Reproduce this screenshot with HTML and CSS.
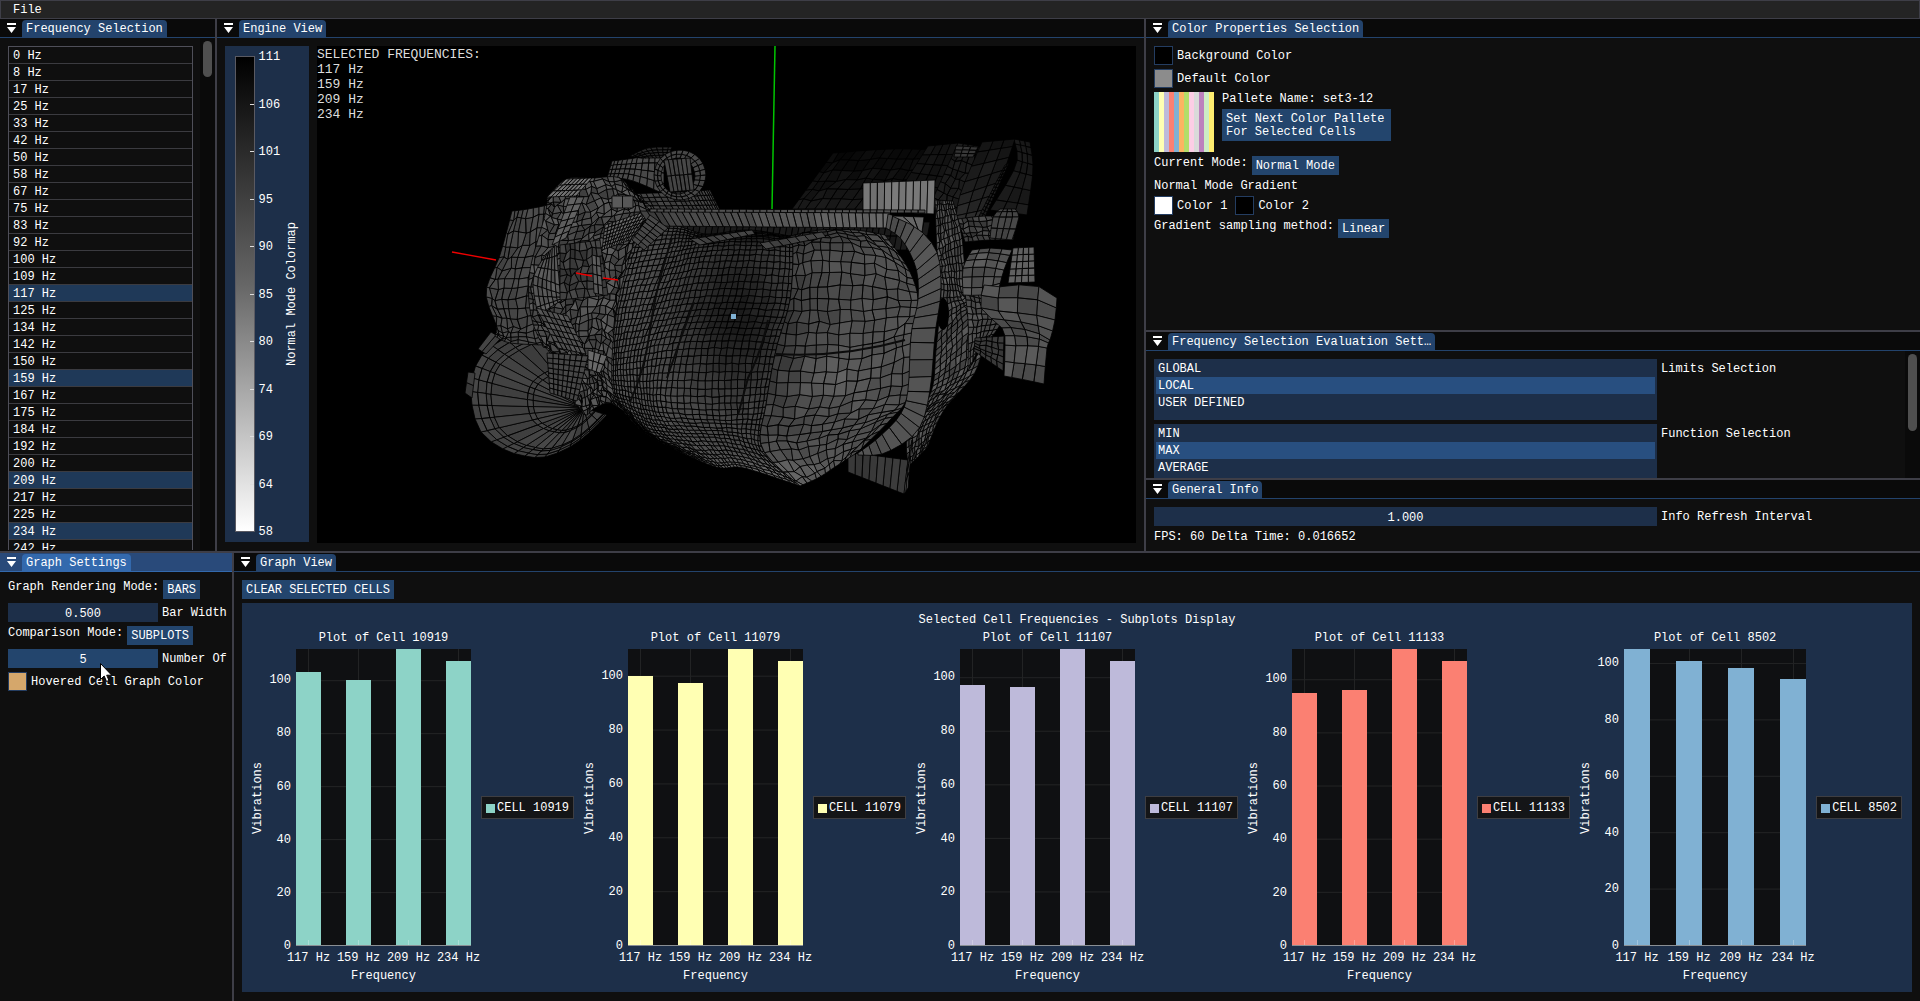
FILE: index.html
```html
<!DOCTYPE html>
<html lang="en">
<head>
<meta charset="utf-8">
<title>Engine Vibration Viewer</title>
<link rel="stylesheet" href="styles.css">
</head>
<body>
<svg class="defs" width="0" height="0" aria-hidden="true">
  <symbol id="collapse" viewBox="0 0 9 10"><path d="M0 0h9v2H0zM0 4h9L4.500 10z" fill="#fff"/></symbol>
</svg>
<nav class="menubar"><button class="menu-item" type="button">File</button></nav>
<main class="workspace">
  <div class="upper">
    <section class="window">
      <header class="tabbar"><svg class="collapse"><use href="#collapse"/></svg><h2 class="tab">Frequency Selection</h2></header>
      <div class="body scroll-body freq-body">
        <div class="scroll-content">
        <table class="freqs"><tbody>
          <tr><td>0 Hz</td></tr><tr><td>8 Hz</td></tr><tr><td>17 Hz</td></tr><tr><td>25 Hz</td></tr><tr><td>33 Hz</td></tr>
          <tr><td>42 Hz</td></tr><tr><td>50 Hz</td></tr><tr><td>58 Hz</td></tr><tr><td>67 Hz</td></tr><tr><td>75 Hz</td></tr>
          <tr><td>83 Hz</td></tr><tr><td>92 Hz</td></tr><tr><td>100 Hz</td></tr><tr><td>109 Hz</td></tr><tr class="selected"><td>117 Hz</td></tr>
          <tr><td>125 Hz</td></tr><tr><td>134 Hz</td></tr><tr><td>142 Hz</td></tr><tr><td>150 Hz</td></tr><tr class="selected"><td>159 Hz</td></tr>
          <tr><td>167 Hz</td></tr><tr><td>175 Hz</td></tr><tr><td>184 Hz</td></tr><tr><td>192 Hz</td></tr><tr><td>200 Hz</td></tr>
          <tr class="selected"><td>209 Hz</td></tr><tr><td>217 Hz</td></tr><tr><td>225 Hz</td></tr><tr class="selected"><td>234 Hz</td></tr><tr><td>242 Hz</td></tr>
        </tbody></table>
        </div>
        <div class="scrollbar"><div class="thumb thumb-short"></div></div>
      </div>
    </section>

    <section class="window">
      <header class="tabbar"><svg class="collapse"><use href="#collapse"/></svg><h2 class="tab">Engine View</h2></header>
      <div class="body engine-body">
        <div class="colormap">
          <div class="ramp"><i></i><i></i><i></i><i></i><i></i><i></i><i></i><i></i><i></i></div>
          <div class="ramp-labels"><span>111</span><span>106</span><span>101</span><span>95</span><span>90</span><span>85</span><span>80</span><span>74</span><span>69</span><span>64</span><span>58</span></div>
          <div class="vertical">Normal Mode Colormap</div>
        </div>
        <div class="viewport">
          <svg id="scene" viewBox="317 46 819 497" preserveAspectRatio="xMidYMid meet" role="img" aria-label="Engine mesh"></svg>
          <div class="overlay-text">SELECTED FREQUENCIES:<br>117 Hz<br>159 Hz<br>209 Hz<br>234 Hz</div>
        </div>
      </div>
    </section>

    <div class="side">
      <section class="window">
        <header class="tabbar"><svg class="collapse"><use href="#collapse"/></svg><h2 class="tab">Color Properties Selection</h2></header>
        <div class="body stack">
          <div class="field"><input class="swatch" type="color" id="bg" value="#000000"><label for="bg">Background Color</label></div>
          <div class="field"><input class="swatch" type="color" id="def" value="#8c8c8c"><label for="def">Default Color</label></div>
          <div class="palette-row">
            <div class="palette"></div>
            <div class="stack palette-info"><span class="caption">Pallete Name: set3-12</span><button class="btn btn-wide" type="button">Set Next Color Pallete<br>For Selected Cells</button></div>
          </div>
          <div class="option"><span class="caption">Current Mode:</span><button class="btn" type="button">Normal Mode</button></div>
          <div class="caption">Normal Mode Gradient</div>
          <div class="pair">
            <div class="field"><input class="swatch" type="color" id="c1" value="#ffffff"><label for="c1">Color 1</label></div>
            <div class="field"><input class="swatch" type="color" id="c2" value="#000000"><label for="c2">Color 2</label></div>
          </div>
          <div class="option"><span class="caption">Gradient sampling method:</span><button class="btn" type="button">Linear</button></div>
        </div>
      </section>
      <section class="window">
        <header class="tabbar"><svg class="collapse"><use href="#collapse"/></svg><h2 class="tab">Frequency Selection Evaluation Sett…</h2></header>
        <div class="body scroll-body">
          <div class="scroll-content stack">
            <div class="list-row">
              <div class="listbox" role="listbox" aria-labelledby="limits"><button role="option" type="button">GLOBAL</button><button role="option" type="button" aria-selected="true">LOCAL</button><button role="option" type="button">USER DEFINED</button></div>
              <span id="limits">Limits Selection</span>
            </div>
            <div class="list-row">
              <div class="listbox" role="listbox" aria-labelledby="func"><button role="option" type="button">MIN</button><button role="option" type="button" aria-selected="true">MAX</button><button role="option" type="button">AVERAGE</button></div>
              <span id="func">Function Selection</span>
            </div>
          </div>
          <div class="scrollbar"><div class="thumb thumb-long"></div></div>
        </div>
      </section>
      <section class="window">
        <header class="tabbar"><svg class="collapse"><use href="#collapse"/></svg><h2 class="tab">General Info</h2></header>
        <div class="body stack">
          <div class="field"><input class="value" type="text" id="refresh" value="1.000"><label for="refresh">Info Refresh Interval</label></div>
          <div class="caption">FPS: 60 Delta Time: 0.016652</div>
        </div>
      </section>
    </div>
  </div>

  <div class="lower">
    <section class="window focused">
      <header class="tabbar"><svg class="collapse"><use href="#collapse"/></svg><h2 class="tab">Graph Settings</h2></header>
      <div class="body stack">
        <div class="option"><span class="caption">Graph Rendering Mode:</span><button class="btn" type="button">BARS</button></div>
        <div class="field"><input class="value" type="text" id="barw" value="0.500"><label for="barw">Bar Width</label></div>
        <div class="option"><span class="caption">Comparison Mode:</span><button class="btn" type="button">SUBPLOTS</button></div>
        <div class="field"><input class="value hovered" type="text" id="num" value="5"><label for="num">Number Of</label></div>
        <div class="field"><input class="swatch" type="color" id="hov" value="#d5a76b"><label for="hov">Hovered Cell Graph Color</label></div>
      </div>
      <svg class="cursor" viewBox="0 0 12 19"><path d="M.5.5v16l3.700-3.500 2.300 5.500 2.500-1-2.300-5.300h5z" fill="#fff" stroke="#000"/></svg>
    </section>

    <section class="window">
      <header class="tabbar"><svg class="collapse"><use href="#collapse"/></svg><h2 class="tab">Graph View</h2></header>
      <div class="body stack graph-body">
        <div class="toolbar"><button class="btn" type="button">CLEAR SELECTED CELLS</button></div>
        <div class="plots">
          <h3 class="plots-title">Selected Cell Frequencies - Subplots Display</h3>
          <div class="plots-row">
            <figure class="subplot" style="--c:#8dd3c7;--step:17.900%">
              <div class="vertical ylabel">Vibrations</div>
              <div class="yticks"><span>0</span><span>20</span><span>40</span><span>60</span><span>80</span><span>100</span></div>
              <div class="chart"><figcaption>Plot of Cell 10919</figcaption>
                <div class="area"><i><b style="height:92.200%"></b></i><i><b style="height:89.500%"></b></i><i><b style="height:100%"></b></i><i><b style="height:96%"></b></i></div>
                <div class="xticks"><span>117 Hz</span><span>159 Hz</span><span>209 Hz</span><span>234 Hz</span></div>
                <div class="xlabel">Frequency</div></div>
              <div class="legend"><i></i>CELL 10919</div>
            </figure>
            <figure class="subplot" style="--c:#ffffb3;--step:18.200%">
              <div class="vertical ylabel">Vibrations</div>
              <div class="yticks"><span>0</span><span>20</span><span>40</span><span>60</span><span>80</span><span>100</span></div>
              <div class="chart"><figcaption>Plot of Cell 11079</figcaption>
                <div class="area"><i><b style="height:90.800%"></b></i><i><b style="height:88.600%"></b></i><i><b style="height:100%"></b></i><i><b style="height:96%"></b></i></div>
                <div class="xticks"><span>117 Hz</span><span>159 Hz</span><span>209 Hz</span><span>234 Hz</span></div>
                <div class="xlabel">Frequency</div></div>
              <div class="legend"><i></i>CELL 11079</div>
            </figure>
            <figure class="subplot" style="--c:#bebada;--step:18.100%">
              <div class="vertical ylabel">Vibrations</div>
              <div class="yticks"><span>0</span><span>20</span><span>40</span><span>60</span><span>80</span><span>100</span></div>
              <div class="chart"><figcaption>Plot of Cell 11107</figcaption>
                <div class="area"><i><b style="height:87.900%"></b></i><i><b style="height:87.200%"></b></i><i><b style="height:100%"></b></i><i><b style="height:96%"></b></i></div>
                <div class="xticks"><span>117 Hz</span><span>159 Hz</span><span>209 Hz</span><span>234 Hz</span></div>
                <div class="xlabel">Frequency</div></div>
              <div class="legend"><i></i>CELL 11107</div>
            </figure>
            <figure class="subplot" style="--c:#fb8072;--step:17.960%">
              <div class="vertical ylabel">Vibrations</div>
              <div class="yticks"><span>0</span><span>20</span><span>40</span><span>60</span><span>80</span><span>100</span></div>
              <div class="chart"><figcaption>Plot of Cell 11133</figcaption>
                <div class="area"><i><b style="height:85.200%"></b></i><i><b style="height:86.200%"></b></i><i><b style="height:100%"></b></i><i><b style="height:96%"></b></i></div>
                <div class="xticks"><span>117 Hz</span><span>159 Hz</span><span>209 Hz</span><span>234 Hz</span></div>
                <div class="xlabel">Frequency</div></div>
              <div class="legend"><i></i>CELL 11133</div>
            </figure>
            <figure class="subplot" style="--c:#80b1d3;--step:19.060%">
              <div class="vertical ylabel">Vibrations</div>
              <div class="yticks"><span>0</span><span>20</span><span>40</span><span>60</span><span>80</span><span>100</span></div>
              <div class="chart"><figcaption>Plot of Cell 8502</figcaption>
                <div class="area"><i><b style="height:100%"></b></i><i><b style="height:96%"></b></i><i><b style="height:93.600%"></b></i><i><b style="height:89.900%"></b></i></div>
                <div class="xticks"><span>117 Hz</span><span>159 Hz</span><span>209 Hz</span><span>234 Hz</span></div>
                <div class="xlabel">Frequency</div></div>
              <div class="legend"><i></i>CELL 8502</div>
            </figure>
          </div>
        </div>
      </div>
    </section>
  </div>
</main>
<script src="scene.js"></script>
</body>
</html>
```
FILE: styles.css
```css
* { box-sizing: border-box; }
body {
  margin: 0;
  height: 100vh;
  display: flex;
  flex-direction: column;
  overflow: hidden;
  background: #0f0f0f;
  color: #fff;
  font: 12px/13px "Liberation Mono", "DejaVu Sans Mono", monospace;
}
h2, h3, figure { margin: 0; font: inherit; }
button, input { font: inherit; color: inherit; border: 0; border-radius: 0; margin: 0; }
.defs { display: none; }

.menubar {
  flex: none;
  height: 19px;
  display: flex;
  padding: 0 8px;
  background: #242424;
  border: 1px solid #3e3e47;
}
.menu-item { background: none; padding: 2px 4px 0; line-height: 15px; }

.workspace {
  flex: 1;
  min-height: 0;
  display: grid;
  grid-template-rows: minmax(0, 532fr) minmax(0, 448fr);
  gap: 2px;
  background: #3e3e47;
}
.upper, .lower, .side { display: grid; gap: 2px; min-width: 0; min-height: 0; }
.upper { grid-template-columns: 215px minmax(0, 1fr) 774px; }
.lower { grid-template-columns: 232px minmax(0, 1fr); }
.side { grid-template-rows: minmax(0, 311fr) minmax(0, 146fr) minmax(0, 71fr); }

.window {
  position: relative;
  display: flex;
  flex-direction: column;
  min-width: 0;
  min-height: 0;
  overflow: hidden;
  background: #0f0f0f;
}
.tabbar {
  flex: none;
  height: 19px;
  display: flex;
  align-items: flex-end;
  gap: 6px;
  padding-left: 7px;
  background: #0a0a0a;
  border-bottom: 1px solid #23436c;
}
.collapse { width: 9px; height: 10px; align-self: center; }
.tab { height: 17px; padding: 2px 4px 0; line-height: 15px; border-radius: 4px 4px 0 0; background: #23436c; white-space: nowrap; }
.focused .tabbar { background: #294a7a; border-color: #3369ad; }
.focused .tab { background: #3369ad; }

.body { flex: 1; min-height: 0; padding: 8px; white-space: nowrap; }
.stack { display: flex; flex-direction: column; gap: 4px; }

.scroll-body { display: flex; padding: 0; }
.scroll-content { flex: 1; min-width: 0; min-height: 0; padding: 8px 7px 0 8px; overflow: hidden; }
.scrollbar { flex: none; width: 15px; padding: 3px; background: #0a0a0a; }
.thumb { border-radius: 5px; background: #4f4f4f; }
.thumb-short { height: 36px; }
.thumb-long { height: 77px; }
.freq-body { padding-bottom: 1px; }

.freqs { width: 185px; border-collapse: separate; border-spacing: 0; border: 1px solid #4f4f59; }
.freqs td { height: 17px; padding: 2px 4px 0; line-height: 14px; border-bottom: 1px solid #3b3b40; }
.freqs .selected td { background: #1f3958; }

.engine-body { display: flex; gap: 8px; }
.colormap { flex: none; width: 84px; margin-bottom: 1px; padding: 10px; display: flex; background: #1d2f49; }
.ramp {
  width: 20px;
  display: flex;
  flex-direction: column;
  justify-content: space-evenly;
  align-items: flex-end;
  border: 1px solid #5a5a62;
  background: linear-gradient(#000, #666 48%, #fff);
}
.ramp i { width: 4px; height: 1px; background: #ddd; }
.ramp-labels { margin: -5px 0 -7px 4px; width: 24px; display: flex; flex-direction: column; justify-content: space-between; }
.vertical { writing-mode: vertical-rl; transform: rotate(180deg); text-align: center; }
.colormap .vertical { margin-left: 4px; }
.viewport { position: relative; flex: 1; min-width: 0; background: #000; overflow: hidden; }
.viewport svg { display: block; width: 100%; height: 100%; }
.overlay-text { position: absolute; top: 1px; left: 0; color: #ddd; font-size: 13px; line-height: 15px; }

.field { display: flex; gap: 4px; }
.field label { padding-top: 2px; line-height: 17px; }
.swatch { width: 19px; height: 19px; padding: 0; background: none; border: 1px solid #243d61; appearance: none; }
.swatch::-webkit-color-swatch-wrapper { padding: 0; }
.swatch::-webkit-color-swatch { border: 0; border-radius: 0; }
.btn { padding: 4px 4px 2px; background: #23456d; text-align: left; white-space: nowrap; }
.option { display: flex; align-items: flex-start; gap: 4px; }
.palette-row { display: flex; gap: 8px; }
.palette {
  width: 60px;
  height: 60px;
  background: linear-gradient(90deg, #8dd3c7 5px, #ffffb3 5px 10px, #bebada 10px 15px, #fb8072 15px 20px, #80b1d3 20px 25px, #fdb462 25px 30px, #b3de69 30px 35px, #fccde5 35px 40px, #d9d9d9 40px 45px, #bc80bd 45px 50px, #ccebc5 50px 55px, #ffed6f 55px);
}
.btn-wide { width: 169px; }
.caption { height: 13px; line-height: 15px; }
.pair { display: flex; gap: 8px; }

.value { flex: none; width: 503px; height: 19px; padding: 2px 0 0; text-align: center; background: #1d2f49; }
.focused .value { width: 150px; }
.focused .value.hovered { background: #23456d; }
.cursor { position: absolute; left: 100px; top: 110px; width: 12px; height: 19px; }

.list-row { display: flex; gap: 4px; }
.list-row > span { padding-top: 4px; }
.listbox { flex: none; width: 503px; height: 61px; padding: 1px 2px; display: flex; flex-direction: column; background: #1d2f49; }
.listbox button { height: 17px; padding: 2px 2px 0; text-align: left; background: none; }
.listbox [aria-selected] { background: #284f80; }

.graph-body { padding-bottom: 9px; }
.toolbar { display: flex; }
.plots { flex: 1; min-height: 0; padding: 11px 10px 9px; display: flex; flex-direction: column; gap: 5px; background: #1d2f49; }
.plots-title { text-align: center; }
.plots-row { flex: 1; min-height: 0; display: flex; gap: 10px; }
.subplot { flex: 1 1 0; min-width: 0; display: flex; }
.ylabel { margin: 17px 0 37px; }
.yticks { width: 26px; margin: 17px 5px 37px 0; display: flex; flex-direction: column-reverse; }
.yticks span { height: var(--step); margin-top: -6px; margin-bottom: 6px; text-align: right; }
.yticks span:first-child { height: 0; }
.chart { flex: 1; min-width: 0; display: flex; flex-direction: column; text-align: center; }
.chart figcaption { height: 17px; }
.area {
  flex: 1;
  min-height: 0;
  display: flex;
  justify-content: space-between;
  border-bottom: 1px solid #8a8f94;
  background: #0f1012 linear-gradient(0deg, transparent calc(100% - 1px), #222324 0) 0 100% / 100% var(--step);
}
.area i { width: 14.285%; display: flex; align-items: flex-end; background: linear-gradient(#222324, #222324) 50% 0 / 1px 100% no-repeat; }
.area b { flex: 1; background: linear-gradient(#ffffff44, #ffffff44) 50% 100% / 1px 5px no-repeat var(--c); }
.xticks { height: 18px; padding-top: 6px; display: flex; justify-content: space-between; }
.xticks span { width: 14.285%; display: flex; justify-content: center; white-space: nowrap; }
.xlabel { height: 19px; padding-top: 6px; }
.legend { align-self: center; display: flex; align-items: center; gap: 2px; margin-left: 10px; padding: 5px 4px 3px; border: 1px solid #3e3e42; background: #141517; }
.legend i { width: 9px; height: 9px; background: var(--c); }
```
FILE: scene.js
```js
// Builds the engine mesh: each patch is a grid of control points,
// interpolated with Catmull-Rom splines and split into shaded quads.
(function () {
  const scene = document.getElementById('scene');
  const NS = 'http://www.w3.org/2000/svg';

  function add(tag, attrs) {
    const el = document.createElementNS(NS, tag);
    for (const k in attrs) el.setAttribute(k, attrs[k]);
    scene.appendChild(el);
  }
  function noise(a, b) {
    const s = Math.sin(a * 12.9898 + b * 78.233) * 43758.5453;
    return s - Math.floor(s) - 0.5;
  }
  function spline(pts, t) {
    const n = pts.length - 1;
    const i = Math.min(n - 1, Math.floor(t * n));
    const f = t * n - i;
    if (n === 1) return [0, 1].map(k => pts[0][k] + (pts[1][k] - pts[0][k]) * f);
    const a = pts[Math.max(0, i - 1)], b = pts[i], c = pts[i + 1], d = pts[Math.min(n, i + 2)];
    return [0, 1].map(k => 0.5 * (2 * b[k] + (c[k] - a[k]) * f +
      (2 * a[k] - 5 * b[k] + 4 * c[k] - d[k]) * f * f +
      (3 * b[k] - a[k] - 3 * c[k] + d[k]) * f * f * f));
  }
  function patch(rows, nu, nv, shade, o) {
    o = o || {};
    const grain = o.grain || 6, jitter = o.jitter || 0;
    const vs = o.vs || Array.from({ length: nv + 1 }, (_, j) => j / nv);
    const grid = vs.map((v, j) => Array.from({ length: nu + 1 }, (_, i) => {
      const p = spline(rows.map(r => spline(r, i / nu)), v);
      const edge = i === 0 || i === nu || j === 0 || j === vs.length - 1;
      return edge ? p : [p[0] + noise(i, j) * jitter, p[1] + noise(j, i + 9) * jitter];
    }));
    const groups = {};
    for (let j = 0; j < vs.length - 1; j++) for (let i = 0; i < nu; i++) {
      const q = [grid[j][i], grid[j][i + 1], grid[j + 1][i + 1], grid[j + 1][i]];
      const base = typeof shade === 'function' ? shade(q[0][0], q[0][1]) : shade;
      const s = Math.max(4, Math.round((base + noise(i + 3, j + 5) * grain) / 3) * 3);
      (groups[s] = groups[s] || []).push('M' + q.map(p => p[0].toFixed(1) + ' ' + p[1].toFixed(1)).join('L') + 'Z');
    }
    for (const s in groups) add('path', { d: groups[s].join(''), fill: `rgb(${s},${s},${s})`, stroke: '#000', 'stroke-width': o.line || 0.8 });
  }
  const glow = (x, y, cx, cy, rx, ry) => Math.exp(-(((x - cx) / rx) ** 2 + ((y - cy) / ry) ** 2));

  // Rear housing
  patch([[[833,153],[890,149],[940,150]],[[792,209],[850,209],[910,211]]], 13, 6, (x, y) => 8 + (y - 150) * 0.35, { jitter: 3 });
  patch([[[928,146],[958,143]],[[900,190],[938,200]]], 4, 5, 20);
  patch([[[958,143],[984,147]],[[930,205],[960,222]]], 5, 8, 28, { jitter: 3 });
  patch([[[956,146],[978,147]],[[954,157],[973,157]]], 3, 3, 55);
  patch([[[1014,139],[1030,142]],[[1016,165],[1033,170]],[[990,210],[1027,215]]], 3, 7, 26);
  patch([[[982,142],[1015,139]],[[960,195],[1000,182]],[[955,230],[977,231]]], 3, 8, (x, y) => 20 + (y - 140) * 0.3);
  patch([[[1005,165],[1009,163]],[[976,222],[981,226]]], 2, 18, 30);

  // Right side block and its pipe fittings
  patch([[[958,219],[985,216],[1018,217]],[[965,242],[990,240],[1013,240]]], 10, 5, 66, { grain: 26, jitter: 3 });
  patch([[[1000,209],[1015,209]],[[993,217],[1019,217]],[[990,238],[1012,240]]], 4, 4, 70);
  patch([[[935,200],[953,201]],[[937,250],[962,238]],[[941,290],[968,292]],[[936,350],[984,302]],[[931,392],[978,366]],[[908,430],[944,410]],[[908,467],[927,448]]], 9, 42, 78, { grain: 30, jitter: 2 });
  patch([[[963,280],[992,292]],[[968,320],[1002,320]],[[968,371],[980,350]]], 7, 14, 78, { grain: 24, jitter: 2 });
  add('ellipse', { cx: 943, cy: 314, rx: 6, ry: 16, fill: '#000' });
  patch([[[972,250],[990,248],[1012,250]],[[963,268],[985,267],[1004,270]],[[963,295],[982,295],[999,288]]], 4, 6, 86, { grain: 26 });
  patch([[[975,338],[1004,336]],[[974,351],[1003,371]]], 5, 5, 58, { jitter: 2 });
  patch([[[984,285],[1006,287],[1032,284],[1057,298]],[[981,308],[1005,312],[1030,314],[1055,320]],[[1002,328],[1015,328],[1035,332],[1050,340]],[[1005,345],[1020,346],[1035,346],[1047,348]],[[1004,376],[1015,378],[1030,381],[1044,384]]], 4, 8, 80, { grain: 22 });
  patch([[[1013,248],[1034,247]],[[1008,283],[1035,282]]], 4, 5, 98);

  // Mount plate above the block and the lower foot
  patch([[[863,183],[935,180]],[[863,211],[934,214]]], 10, 1, 116, { grain: 14 });
  patch([[[848,452],[908,460]],[[848,472],[904,494]]], 8, 1, 56);
  patch([[[908,460],[912,440]],[[904,494],[908,488]]], 2, 3, 88);

  // Top cylinder
  patch([[[612,161],[635,158],[664,152]],[[607,178],[630,180],[664,194]]], 11, 4, 74);
  patch([[[630,156],[648,148],[672,147]],[[640,158],[655,158],[668,158]]], 9, 4, 40);
  patch([[[628,194],[680,192],[710,190]],[[636,210],[690,210],[720,210]]], 20, 4, 64, { grain: 14 });
  const ring = (cx, cy, rx, ry) => Array.from({ length: 17 }, (_, i) => [cx + rx * Math.cos(i * Math.PI / 8), cy + ry * Math.sin(i * Math.PI / 8)]);
  patch([ring(680,175,26,25), ring(678,176,17,18)], 26, 2, 70);
  patch([[[664,160],[690,158]],[[670,192],[694,190]]], 6, 2, 68);

  // Left plate, bell housing and accessory cluster
  const rim = [[533,325],[505,338],[482,355],[472,378],[472,405],[481,432],[503,449],[525,456],[545,457],[570,447],[590,432],[607,415]];
  const toward = k => rim.map(p => [p[0] + (584 - p[0]) * k, p[1] + (408 - p[1]) * k]);
  patch([rim, toward(0.5), toward(0.95)], 22, 0, 66, { vs: [0, 0.09, 0.17, 0.21, 0.5, 0.55, 1], grain: 10 });
  patch([[[491,332],[501,338]],[[478,349],[486,354]]], 2, 1, 66);
  patch([[[468,372],[475,373]],[[465,393],[472,398]]], 1, 2, 60);
  patch([[[512,211],[528,209],[548,205]],[[500,255],[520,255],[545,250]],[[486,292],[510,295],[540,290]],[[496,325],[512,330],[540,325]],[[495,336],[510,343],[545,345]]], 8, 15, 72, { grain: 12, jitter: 4 });
  patch([[[547,197],[566,179],[592,178],[620,178],[636,197]],[[545,215],[570,225],[600,215],[630,210],[652,210]],[[530,270],[560,265],[595,250],[620,255],[640,240]],[[530,310],[555,310],[580,300],[610,300],[622,310]],[[540,340],[560,350],[580,345],[600,345],[620,360]],[[560,365],[575,375],[590,375],[605,385],[625,410]],[[575,400],[585,415],[595,408],[612,404],[640,425]]], 19, 38, 76, { grain: 34, jitter: 5 });
  patch([[[566,179],[592,178]],[[547,197],[576,196]]], 7, 3, 112);
  patch([[[570,197],[584,197]],[[552,245],[566,238]]], 2, 6, 96);
  patch([[[612,196],[633,196]],[[612,208],[633,208]]], 2, 1, 88);
  patch([[[545,255],[556,245]],[[533,280],[560,290]],[[538,315],[562,300]]], 6, 7, 88, { grain: 20 });
  patch([[[560,245],[600,240]],[[560,300],[608,295]]], 8, 7, 60, { grain: 26, jitter: 5 });
  patch([[[592,255],[600,257]],[[594,293],[603,295]]], 2, 4, 90);
  patch([[[536,308],[568,316]],[[558,348],[586,354]]], 6, 6, 82, { grain: 16 });
  patch([[[588,350],[607,356]],[[588,369],[600,373]]], 3, 2, 104);
  patch([[[547,353],[588,356]],[[550,393],[577,401]]], 7, 8, 70);
  patch([[[605,225],[650,210]],[[602,250],[630,240]]], 12, 7, 100, { grain: 20 });

  // Block cover: dense left half, coarse right half, rim on the top and right
  patch([[[645,222],[930,222]],[[640,250],[925,250]]], 46, 2, 26);
  const left = [
    [[640,228],[676,226],[706,234],[748,230],[790,236]],
    [[628,262],[668,256],[702,250],[748,248],[793,250]],
    [[617,310],[650,306],[688,300],[738,298],[790,300]],
    [[612,360],[636,356],[672,350],[724,348],[776,350]],
    [[614,395],[638,402],[666,406],[722,408],[766,405]],
    [[628,415],[650,432],[685,438],[728,440],[762,448]],
    [[642,432],[672,448],[716,467],[744,468],[800,486]]];
  const body = (x, y) => 80 - 52 * glow(x, y, 735, 312, 60, 90) + 30 * glow(x, y, 740, 474, 90, 16)
    - 36 * glow(x, y, 770, 232, 80, 10) + 18 * glow(x, y, 825, 370, 40, 22);
  patch(left, 34, 46, body, { jitter: 1.2, grain: 7 });
  patch([
    [[790,236],[820,230],[855,230],[885,235]],
    [[793,250],[825,246],[870,250],[908,268]],
    [[790,300],[822,300],[870,298],[918,300]],
    [[776,350],[820,352],[870,350],[911,338]],
    [[766,405],[812,408],[860,402],[908,395]],
    [[762,448],[802,445],[845,435],[890,420]],
    [[800,486],[818,478],[838,465],[858,452]]], 13, 27, body, { jitter: 4, grain: 13 });
  for (const d of ['M672 238Q655 290 650 330T630 402', 'M694 302Q680 340 667 378', 'M776 354Q840 358 905 340', 'M768 320Q762 350 748 378L738 415'])
    add('path', { d, fill: 'none', stroke: '#0c0c0c', 'stroke-width': 2 });
  patch([[[690,239],[752,230]],[[700,245],[755,234]]], 8, 1, 66);
  patch([[[760,243],[822,232]],[[766,249],[826,237]]], 7, 1, 66);
  patch([[[640,211],[890,213]],[[650,226],[890,228]]], 36, 1, x => 62 + (x - 640) * 0.16, { grain: 14 });
  patch([[[650,209],[925,210]],[[650,212],[925,213]]], 40, 1, 80);
  patch([[[632,240],[650,215]],[[644,250],[668,228]]], 7, 2, 70);
  patch([[[888,214],[910,222],[936,250],[941,290],[935,335],[930,390],[918,430],[885,453],[858,455]],
    [[886,228],[902,240],[916,268],[918,300],[911,335],[908,390],[900,415],[878,438],[858,453]]], 27, 1, 80, { grain: 12 });
  patch([[[892,216],[924,217]],[[910,224],[922,232]]], 3, 1, 104);

  // Axes and the picked cell
  add('path', { d: 'M775 46L772 209', stroke: '#00c400', 'stroke-width': 1.5 });
  add('path', { d: 'M452 252L496 260M576 273L592 276M603 278L618 280', stroke: '#f00000', 'stroke-width': 1.3 });
  add('rect', { x: 731, y: 314, width: 5, height: 5, fill: '#80b1d3' });
})();
```
